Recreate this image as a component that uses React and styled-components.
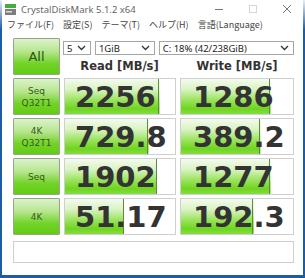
import { Fragment } from 'react';
import styled, { createGlobalStyle } from 'styled-components';

const GlobalStyle = createGlobalStyle`
  html, body {
    margin: 0;
    padding: 0;
    background: #1b5ca4;
  }
`;

const Desktop = styled.div`
  width: 305px;
  height: 278px;
  box-sizing: border-box;
  padding: 0 3px 3px 2px;
  display: flex;
  background: linear-gradient(to bottom, #e8eef5 0px, #1b5ca4 30px);
`;

const Window = styled.div`
  flex: 1;
  display: flex;
  flex-direction: column;
  background: #ffffff;
  font-family: 'Noto Sans', 'Noto Sans CJK JP', sans-serif;
`;

const TitleBar = styled.div`
  height: 22px;
  display: flex;
  align-items: center;
  padding-left: 3px;
  color: #666;
  font-size: 9.5px;
`;

const TitleText = styled.span`
  margin-left: 5px;
  flex: 1;
`;

const WinControls = styled.div`
  display: flex;
  align-items: center;
  gap: 26px;
  margin-right: 12px;
  svg {
    display: block;
  }
`;

const MenuBar = styled.div`
  height: 14px;
  display: flex;
  align-items: center;
  gap: 9px;
  padding-left: 5px;
  font-size: 9px;
  color: #444;
  font-family: 'Noto Sans CJK JP', sans-serif;
`;

const Content = styled.div`
  padding: 7px 9px 0 11px;
  display: grid;
  grid-template-columns: 47px 112px 114px;
  column-gap: 4px;
  row-gap: 3px;
  grid-auto-rows: 37px;
`;

const GreenButton = styled.div`
  box-sizing: border-box;
  border: 1px solid #9aa393;
  border-radius: 1px;
  background: linear-gradient(to bottom, #dcf2c8 0%, #b8e691 35%, #72d328 70%, #62cc14 100%);
  display: flex;
  flex-direction: column;
  align-items: center;
  justify-content: center;
  color: ${(p) => (p.big ? '#2e5212' : '#365a1a')};
  font-size: ${(p) => (p.big ? '13px' : '9px')};
  line-height: ${(p) => (p.big ? '14px' : '12px')};
  font-family: 'DejaVu Sans', 'Noto Sans', sans-serif;
`;

const TopRight = styled.div`
  grid-column: 2 / 4;
  display: flex;
  flex-direction: column;
  margin-left: -1px;
`;

const ComboRow = styled.div`
  display: flex;
  gap: 4px;
  margin-top: 3px;
`;

const Combo = styled.div`
  box-sizing: border-box;
  width: ${(p) => p.w}px;
  height: 14px;
  border: 1px solid #a5a5a5;
  background: #fff;
  display: flex;
  align-items: center;
  justify-content: space-between;
  padding: 0 4px 0 3px;
  font-size: 9.5px;
  color: #222;
  svg {
    display: block;
  }
`;

const Headers = styled.div`
  display: grid;
  grid-template-columns: 113px 114px;
  column-gap: 4px;
  margin-top: 3px;
`;

const Header = styled.div`
  text-align: center;
  font-family: 'DejaVu Sans', sans-serif;
  font-weight: bold;
  font-size: 11.5px;
  color: #333;
  line-height: 16px;
`;

const Cell = styled.div`
  box-sizing: border-box;
  border: 1px solid #cfcfcf;
  background:
    linear-gradient(#5f8a3c, #5f8a3c) calc(var(--fill) - 1px) 0 / 1px 100% no-repeat,
    linear-gradient(to bottom, #f4fbee 0%, #d9f3c2 30%, #9be35e 60%, #6fd51e 85%, #86dd42 100%) 0 0 / var(--fill) 100% no-repeat,
    #fff;
  display: flex;
  align-items: center;
  padding-left: ${(p) => (p.write ? 12 : 10)}px;
  font-family: 'DejaVu Sans', sans-serif;
  font-weight: bold;
  font-size: 29px;
  color: #333;
`;

const Comment = styled.div`
  grid-column: 1 / 4;
  box-sizing: border-box;
  height: 22px;
  margin-top: 3px;
  border: 1px solid #cfcfcf;
  background: #fff;
`;

const rows = [
  { label: ['Seq', 'Q32T1'], read: '2256', rf: 86, write: '1286', wf: 80 },
  { label: ['4K', 'Q32T1'], read: '729.8', rf: 76, write: '389.2', wf: 71 },
  { label: ['Seq'], read: '1902', rf: 84, write: '1277', wf: 80 },
  { label: ['4K'], read: '51.17', rf: 54, write: '192.3', wf: 65 },
];

function Chevron() {
  return (
    <svg width="9" height="6" viewBox="0 0 9 6">
      <path d="M1 1 L4.5 4.5 L8 1" fill="none" stroke="#333" strokeWidth="1.3" />
    </svg>
  );
}

function AppIcon() {
  return (
    <svg width="11" height="11" viewBox="0 0 11 11">
      <rect x="0" y="0" width="11" height="4" fill="#3fae3a" />
      <rect x="0" y="5" width="11" height="6" fill="#7d7d7d" />
      <rect x="1" y="7" width="6" height="1.5" fill="#dcdcdc" />
    </svg>
  );
}

export default function App() {
  return (
    <>
      <GlobalStyle />
      <Desktop>
        <Window>
          <TitleBar>
            <AppIcon />
            <TitleText>CrystalDiskMark 5.1.2 x64</TitleText>
            <WinControls>
              <svg width="8" height="8" viewBox="0 0 8 8">
                <path d="M0 4.5 H8" stroke="#777" strokeWidth="1" />
              </svg>
              <svg width="8" height="8" viewBox="0 0 8 8">
                <rect x="0.5" y="0.5" width="7" height="7" fill="none" stroke="#d4d4d4" />
              </svg>
              <svg width="8" height="8" viewBox="0 0 8 8">
                <path d="M0 0 L8 8 M8 0 L0 8" stroke="#777" strokeWidth="1" />
              </svg>
            </WinControls>
          </TitleBar>
          <MenuBar>
            <span>ファイル(F)</span>
            <span>設定(S)</span>
            <span>テーマ(T)</span>
            <span>ヘルプ(H)</span>
            <span>言語(Language)</span>
          </MenuBar>
          <Content>
            <GreenButton big>All</GreenButton>
            <TopRight>
              <ComboRow>
                <Combo w={28}>
                  5<Chevron />
                </Combo>
                <Combo w={60}>
                  1GiB<Chevron />
                </Combo>
                <Combo w={136}>
                  C: 18% (42/238GiB)<Chevron />
                </Combo>
              </ComboRow>
              <Headers>
                <Header>Read [MB/s]</Header>
                <Header>Write [MB/s]</Header>
              </Headers>
            </TopRight>
            {rows.map((r) => (
              <Fragment key={r.read}>
                <GreenButton>
                  {r.label.map((t) => (
                    <span key={t}>{t}</span>
                  ))}
                </GreenButton>
                <Cell style={{ '--fill': `${r.rf}%` }}>{r.read}</Cell>
                <Cell write style={{ '--fill': `${r.wf}%` }}>
                  {r.write}
                </Cell>
              </Fragment>
            ))}
            <Comment />
          </Content>
        </Window>
      </Desktop>
    </>
  );
}
